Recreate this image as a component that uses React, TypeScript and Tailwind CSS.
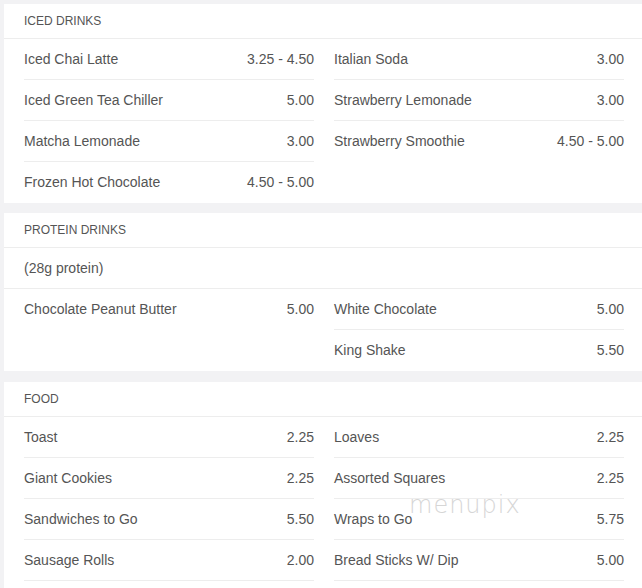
import React from "react";

type Item = { name: string; price: string };

interface Section {
  title: string;
  note?: string;
  left: Item[];
  right: Item[];
  continues?: boolean;
}

const sections: Section[] = [
  {
    title: "ICED DRINKS",
    left: [
      { name: "Iced Chai Latte", price: "3.25 - 4.50" },
      { name: "Iced Green Tea Chiller", price: "5.00" },
      { name: "Matcha Lemonade", price: "3.00" },
      { name: "Frozen Hot Chocolate", price: "4.50 - 5.00" },
    ],
    right: [
      { name: "Italian Soda", price: "3.00" },
      { name: "Strawberry Lemonade", price: "3.00" },
      { name: "Strawberry Smoothie", price: "4.50 - 5.00" },
    ],
  },
  {
    title: "PROTEIN DRINKS",
    note: "(28g protein)",
    left: [{ name: "Chocolate Peanut Butter", price: "5.00" }],
    right: [
      { name: "White Chocolate", price: "5.00" },
      { name: "King Shake", price: "5.50" },
    ],
  },
  {
    title: "FOOD",
    continues: true,
    left: [
      { name: "Toast", price: "2.25" },
      { name: "Giant Cookies", price: "2.25" },
      { name: "Sandwiches to Go", price: "5.50" },
      { name: "Sausage Rolls", price: "2.00" },
    ],
    right: [
      { name: "Loaves", price: "2.25" },
      { name: "Assorted Squares", price: "2.25" },
      { name: "Wraps to Go", price: "5.75" },
      { name: "Bread Sticks W/ Dip", price: "5.00" },
    ],
  },
];

const Column = ({ items, continues }: { items: Item[]; continues?: boolean }) => (
  <div className="w-[290px] flex flex-col">
    {items.map((it, i) => (
      <div
        key={it.name}
        className={`h-[41px] flex items-center justify-between ${
          continues || i < items.length - 1 ? "border-b border-[#ededed]" : ""
        }`}
      >
        <span>{it.name}</span>
        <span>{it.price}</span>
      </div>
    ))}
  </div>
);

export default function App() {
  return (
    <div
      className="relative w-[642px] h-[588px] overflow-hidden bg-[#f2f2f4] pt-[4px] pl-[4px] flex flex-col gap-[10px] text-[14px] text-[#555]"
      style={{ fontFamily: '"Liberation Sans", Arial, sans-serif' }}
    >
      {sections.map((s) => (
        <div
          key={s.title}
          className={`bg-white shrink-0 ${s.continues ? "mt-[1px] pb-[40px]" : ""}`}
        >
          {/* header */}
          <div className="h-[35px] flex items-center pb-[1px] px-[20px] border-b border-[#ededed] text-[12px] text-[#555]">
            {s.title}
          </div>
          {s.note && (
            <div className="h-[41px] flex items-center px-[20px] border-b border-[#ededed]">
              {s.note}
            </div>
          )}
          <div className="flex gap-[20px] pl-[20px]">
            <Column items={s.left} continues={s.continues} />
            <Column items={s.right} continues={s.continues} />
          </div>
        </div>
      ))}

      {/* watermark */}
      <div
        className="absolute left-[409px] top-[493px] text-[24px] leading-none tracking-[1px] text-[#d6d6d6] font-extralight select-none pointer-events-none"
        style={{ fontFamily: '"DejaVu Sans", sans-serif' }}
      >
        menupix
      </div>
    </div>
  );
}
